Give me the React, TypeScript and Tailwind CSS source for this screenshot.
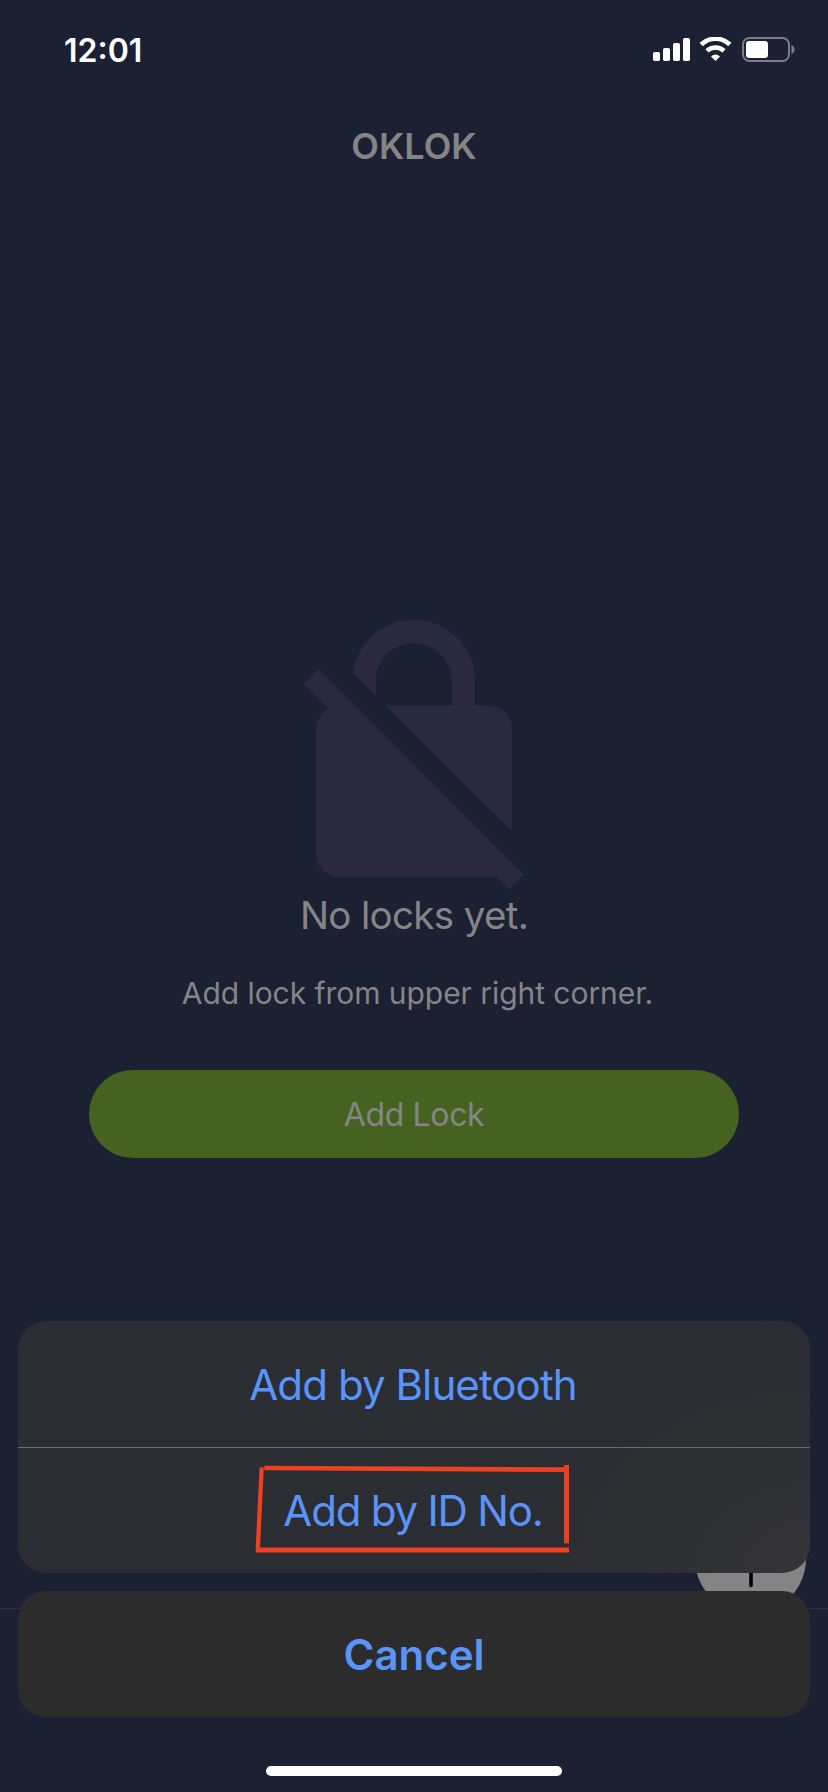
import React from "react";

function StatusIcons() {
  return (
    <svg width="142" height="26" viewBox="0 0 142 26" fill="none" aria-hidden="true">
      <g fill="#fff">
        <rect x="0" y="15" width="7" height="9" rx="1.8" />
        <rect x="10" y="11" width="7" height="13" rx="1.8" />
        <rect x="20" y="6" width="7" height="18" rx="1.8" />
        <rect x="30" y="1" width="7" height="23" rx="1.8" />
      </g>
      <path d="M48.2 7.5 A20.5 20.5 0 0 1 76.8 7.5" stroke="#fff" strokeWidth="4.6" />
      <path d="M54 13.8 A12.4 12.4 0 0 1 71 13.8" stroke="#fff" strokeWidth="4.6" />
      <path d="M58 19.4 Q62.5 15.6 67 19.4 L62.5 24 Z" fill="#fff" />
      <rect x="90" y="1" width="46" height="23" rx="6.5" stroke="#7b7d88" strokeWidth="2" />
      <rect x="93" y="4" width="22" height="17" rx="3.2" fill="#fff" />
      <path d="M138.5 8 Q141.5 9.2 141.5 12.5 Q141.5 15.8 138.5 17 Z" fill="#7b7d88" />
    </svg>
  );
}

function NoLockIcon() {
  return (
    <svg className="h-[300px] w-[270px]" viewBox="0 0 810 900" fill="#292a3f" aria-hidden="true">
      <path d="M116 207 L732 824 L688 868 L649 829 Q640 831 625 831 H178 A70 70 0 0 1 108 761 V388 Q110 347 146 326 L72 252 Z" />
      <path d="M316 316 H515 V243 A114 114 0 0 0 287 243 V287 L219 221 A184 184 0 0 1 402 59 A183 184 0 0 1 585 243 V316 H625 A71 71 0 0 1 696 387 V694 Z" />
    </svg>
  );
}

function Annotation() {
  return (
    <svg
      className="pointer-events-none absolute left-[222px] top-[129px]"
      width="340"
      height="120"
      viewBox="0 0 1020 360"
      fill="none"
      stroke="#ec4125"
      aria-hidden="true"
    >
      <path d="M73 54 L980 59" strokeWidth="14" />
      <path d="M65 52 L53 305" strokeWidth="13" />
      <path d="M979.5 45 V280" strokeWidth="15" />
      <path d="M48 300 H987" strokeWidth="15" />
    </svg>
  );
}

export default function App() {
  return (
    <div className="relative flex h-[1792px] w-[828px] flex-col overflow-hidden bg-[#1c2033] font-['Inter','Liberation_Sans',sans-serif] text-[#858585]">
      <header className="flex h-[100px] items-start justify-between pl-16 pr-[33px] pt-[37px]">
        <span className="-mt-[6px] text-[32px] font-semibold leading-10 text-white">12:01</span>
        <StatusIcons />
      </header>
      <h1 className="flex h-[92px] items-center justify-center text-[36px] font-semibold leading-none">OKLOK</h1>

      <main className="flex flex-col items-center pt-[408px]">
        <div className="flex w-full pl-[280px]">
          <NoLockIcon />
        </div>
        <p className="-mt-[9px] text-[38.5px] leading-[48px] tracking-[-0.65px]">No locks yet.</p>
        <p className="mt-[34px] pl-[7px] text-[30px] leading-10 tracking-[-0.05px]">Add lock from upper right corner.</p>
        <button className="mt-[57px] h-[88px] w-[650px] rounded-full bg-[#466220] pt-[2px] text-[32px] tracking-[-0.35px]">
          Add Lock
        </button>
      </main>

      <div className="absolute inset-x-0 top-[1608px] h-px bg-[#2f3044]" />
      <div className="absolute left-[695px] top-[1503px] flex size-[111px] items-center justify-center rounded-full bg-[#848484]">
        <svg width="60" height="60" viewBox="0 0 60 60" stroke="#000" strokeWidth="3.6" strokeLinecap="round" aria-hidden="true">
          <path d="M30 3.5V56.5M3.5 30H56.5" />
        </svg>
      </div>

      <div className="absolute inset-x-0 bottom-0 flex flex-col items-center px-[18px] text-[#5b93f8]">
        <div className="relative flex h-[252px] w-full flex-col rounded-[28px] bg-[radial-gradient(ellipse_330px_260px_at_100%_100%,#353538_0%,#2e2f33_50%,#2a2d32_100%)]">
          <button className="h-[126px] pr-[2px] text-[42px] tracking-[-0.9px]">Add by Bluetooth</button>
          <div className="h-px w-full shrink-0 bg-[#6b6d71]" />
          <button className="h-[125px] pr-[2px] text-[42px] tracking-[-1.2px]">Add by ID No.</button>
          <Annotation />
        </div>
        <button className="mt-[18px] h-[126px] w-full rounded-[28px] bg-[#2c2c2c] text-[42px] font-semibold">Cancel</button>
        <div className="mb-4 mt-[49px] h-[10px] w-[296px] rounded-full bg-white" />
      </div>
    </div>
  );
}
